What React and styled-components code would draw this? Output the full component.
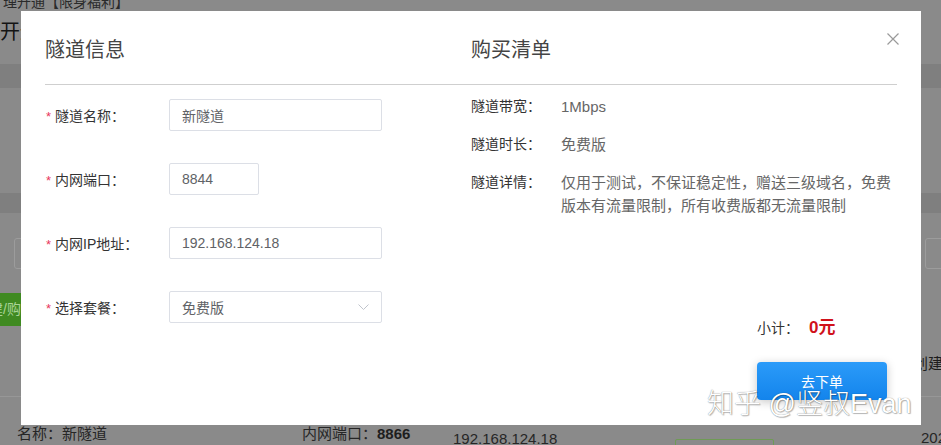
import React from "react";
import styled, { createGlobalStyle } from "styled-components";

const Global = createGlobalStyle`
  html, body { margin: 0; padding: 0; }
  body {
    width: 941px; height: 445px; overflow: hidden;
    font-family: "Liberation Sans", "Noto Sans CJK SC", sans-serif;
  }
`;

const Stage = styled.div`
  position: relative;
  width: 941px;
  height: 445px;
  overflow: hidden;
`;

/* ---------- dimmed page behind the dialog ---------- */
const Backdrop = styled.div`
  display: flex;
  flex-direction: column;
  width: 941px;
  height: 445px;
  background: #8a8a8a;
  color: #1d1d1d;
  overflow: hidden;
  & > * { flex-shrink: 0; }
`;
const Crumb = styled.div`
  margin-top: -6px;
  height: 16px;
  line-height: 16px;
  font-size: 14px;
  padding-left: 3px;
  color: #2a2a2a;
  white-space: nowrap;
`;
const PageTitle = styled.div`
  margin-top: 10px;
  width: 21px;
  height: 24px;
  line-height: 24px;
  font-size: 20px;
  color: #141414;
  white-space: nowrap;
  overflow: hidden;
`;
const Band = styled.div`
  margin-top: ${(p) => p.$top}px;
  height: ${(p) => p.$h}px;
  background: #7f7f7f;
`;
const Toolbar = styled.div`
  margin-top: 25px;
  height: 31px;
  display: flex;
  padding-left: 14px;
`;
const GhostInput = styled.div`
  width: ${(p) => p.$w}px;
  height: 29px;
  border: 1px solid #9c9c9c;
  border-radius: 3px;
  margin-left: ${(p) => p.$ml || 0}px;
  flex-shrink: 0;
`;
const GreenBtn = styled.div`
  margin-top: 24px;
  margin-left: -37px;
  width: 46px;
  height: 33px;
  line-height: 33px;
  padding-left: 12px;
  background: #3f8a21;
  color: #a9d497;
  font-size: 14px;
  white-space: nowrap;
  overflow: hidden;
`;
const TableHead = styled.div`
  margin-top: 24px;
  height: 47px;
  border-bottom: 1px solid #979797;
  display: flex;
  justify-content: flex-end;
  padding-top: 4px;
  line-height: 20px;
  font-size: 15px;
  box-sizing: border-box;
  white-space: nowrap;
`;
const HeadCell = styled.span`
  width: 28px;
  overflow: hidden;
  color: #1d1d1d;
`;
const TableRow = styled.div`
  display: flex;
  align-items: flex-start;
  padding: 27px 0 0 17px;
  font-size: 15px;
  line-height: 20px;
  white-space: nowrap;
  color: #262626;
`;
const Cell = styled.div`
  width: ${(p) => p.$w}px;
  margin-top: ${(p) => p.$mt || 0}px;
  flex-shrink: 0;
  overflow: hidden;
`;
const Strong = styled.b`
  font-weight: 700;
  color: #1e1e1e;
`;
const TagBox = styled.div`
  width: 97px;
  height: 20px;
  border: 1px solid #6f9b55;
  border-radius: 2px;
`;

/* ---------- dialog ---------- */
const Modal = styled.div`
  position: absolute;
  left: 21px;
  top: 11px;
  width: 900px;
  height: 414px;
  background: #fff;
  display: flex;
  flex-direction: column;
`;
const Header = styled.div`
  display: flex;
  margin: 0 24px;
  padding: 25px 0 20px;
  border-bottom: 1px solid #cfcfcf;
`;
const Heading = styled.h2`
  margin: 0;
  width: ${(p) => (p.$w ? `${p.$w}px` : "auto")};
  font-size: 20px;
  line-height: 28px;
  font-weight: 400;
  color: #444;
`;
const Close = styled.button`
  position: absolute;
  top: 22px;
  right: 22px;
  width: 12px;
  height: 12px;
  padding: 0;
  border: 0;
  background: none;
  display: flex;
`;
const Body = styled.div`
  flex: 1;
  display: flex;
  padding: 0 24px 25px;
`;
const FormCol = styled.div`
  width: 426px;
  display: flex;
  flex-direction: column;
  gap: 32px;
  padding-top: 14px;
`;
const FormRow = styled.div`
  display: flex;
  align-items: center;
  height: 32px;
`;
const Label = styled.label`
  width: 124px;
  flex-shrink: 0;
  font-size: 14px;
  color: #333;
  padding-left: 1px;
  box-sizing: border-box;
`;
const Star = styled.span`
  color: #e8365d;
  margin-right: 4px;
  font-size: 13px;
`;
const Field = styled.div`
  position: relative;
  width: ${(p) => p.$w}px;
  height: 32px;
  box-sizing: border-box;
  border: 1px solid #dcdfe6;
  border-radius: 2px;
  padding: 0 12px;
  display: flex;
  align-items: center;
  font-size: 14px;
  color: #606266;
`;
const Chevron = styled.svg`
  position: absolute;
  right: 12px;
  top: 12px;
`;
const InfoCol = styled.div`
  flex: 1;
  display: flex;
  flex-direction: column;
  padding-top: 10px;
`;
const InfoRows = styled.div`
  display: flex;
  flex-direction: column;
  gap: 15px;
`;
const InfoRow = styled.div`
  display: flex;
  line-height: 23px;
`;
const InfoLabel = styled.div`
  width: 90px;
  flex-shrink: 0;
  font-size: 14px;
  color: #333;
`;
const InfoValue = styled.div`
  width: 336px;
  font-size: 15px;
  color: #666;
`;
const Footer = styled.div`
  margin-top: auto;
  align-self: flex-end;
  margin-right: 10px;
  width: 130px;
  display: flex;
  flex-direction: column;
`;
const Subtotal = styled.div`
  display: flex;
  align-items: baseline;
  line-height: 24px;
  font-size: 14px;
  color: #333;
  margin-bottom: 22px;
`;
const Price = styled.span`
  margin-left: 10px;
  font-size: 17px;
  font-weight: 700;
  color: #d0121b;
`;
const OrderBtn = styled.button`
  width: 130px;
  height: 38px;
  border: 0;
  border-radius: 4px;
  background: linear-gradient(#2b9bf9, #1384ec);
  color: #fff;
  font-family: inherit;
  font-size: 14px;
  box-shadow: 0 2px 10px rgba(0, 0, 0, 0.22);
  padding: 0;
`;
const Watermark = styled.div`
  position: absolute;
  left: 707px;
  top: 391px;
  font-size: 27px;
  line-height: 27px;
  font-weight: 300;
  color: #fff;
  white-space: nowrap;
  text-shadow: 0 0 1px rgba(0, 0, 0, 0.55), 1px 1px 1px rgba(0, 0, 0, 0.25);
  pointer-events: none;
`;

const formRows = [
  { label: "隧道名称", value: "新隧道", w: 213 },
  { label: "内网端口", value: "8844", w: 90 },
  { label: "内网IP地址", value: "192.168.124.18", w: 213 },
  { label: "选择套餐", value: "免费版", w: 213, select: true },
];

const infoRows = [
  { label: "隧道带宽：", value: "1Mbps" },
  { label: "隧道时长：", value: "免费版" },
  {
    label: "隧道详情：",
    value:
      "仅用于测试，不保证稳定性，赠送三级域名，免费版本有流量限制，所有收费版都无流量限制",
  },
];

export default function App() {
  return (
    <Stage>
      <Global />
      <Backdrop>
        <Crumb>理开通【限身福利】</Crumb>
        <PageTitle>开通隧道</PageTitle>
        <Band $top={20} $h={24} />
        <Band $top={105} $h={20} />
        <Toolbar>
          <GhostInput $w={200} />
          <GhostInput $w={100} $ml={709} />
        </Toolbar>
        <GreenBtn>新建/购买隧道</GreenBtn>
        <TableHead>
          <HeadCell>创建</HeadCell>
        </TableHead>
        <TableRow>
          <Cell $w={285}>名称：新隧道</Cell>
          <Cell $w={151}>
            内网端口：<Strong>8866</Strong>
          </Cell>
          <Cell $w={222} $mt={5}>192.168.124.18</Cell>
          <Cell $w={246} $mt={15}>
            <TagBox />
          </Cell>
          <Cell $w={20} $mt={4}>2021</Cell>
        </TableRow>
      </Backdrop>

      <Modal>
        <Header>
          <Heading $w={426}>隧道信息</Heading>
          <Heading>购买清单</Heading>
        </Header>
        <Close aria-label="关闭">
          <svg width="12" height="12" viewBox="0 0 12 12">
            <path d="M0.5 0.5 L11.5 11.5 M11.5 0.5 L0.5 11.5" stroke="#9a9a9a" strokeWidth="1.2" fill="none" />
          </svg>
        </Close>
        <Body>
          <FormCol>
            {formRows.map((r) => (
              <FormRow key={r.label}>
                <Label>
                  <Star>*</Star>
                  {r.label}：
                </Label>
                <Field $w={r.w}>
                  {r.value}
                  {r.select && (
                    <Chevron width="11" height="6" viewBox="0 0 11 6">
                      <path d="M0.5 0.5 L5.5 5.5 L10.5 0.5" stroke="#c0c4cc" strokeWidth="1" fill="none" />
                    </Chevron>
                  )}
                </Field>
              </FormRow>
            ))}
          </FormCol>
          <InfoCol>
            <InfoRows>
              {infoRows.map((r) => (
                <InfoRow key={r.label}>
                  <InfoLabel>{r.label}</InfoLabel>
                  <InfoValue>{r.value}</InfoValue>
                </InfoRow>
              ))}
            </InfoRows>
            <Footer>
              <Subtotal>
                小计：<Price>0元</Price>
              </Subtotal>
              <OrderBtn>去下单</OrderBtn>
            </Footer>
          </InfoCol>
        </Body>
      </Modal>
      <Watermark>知乎 @竖叔Evan</Watermark>
    </Stage>
  );
}
